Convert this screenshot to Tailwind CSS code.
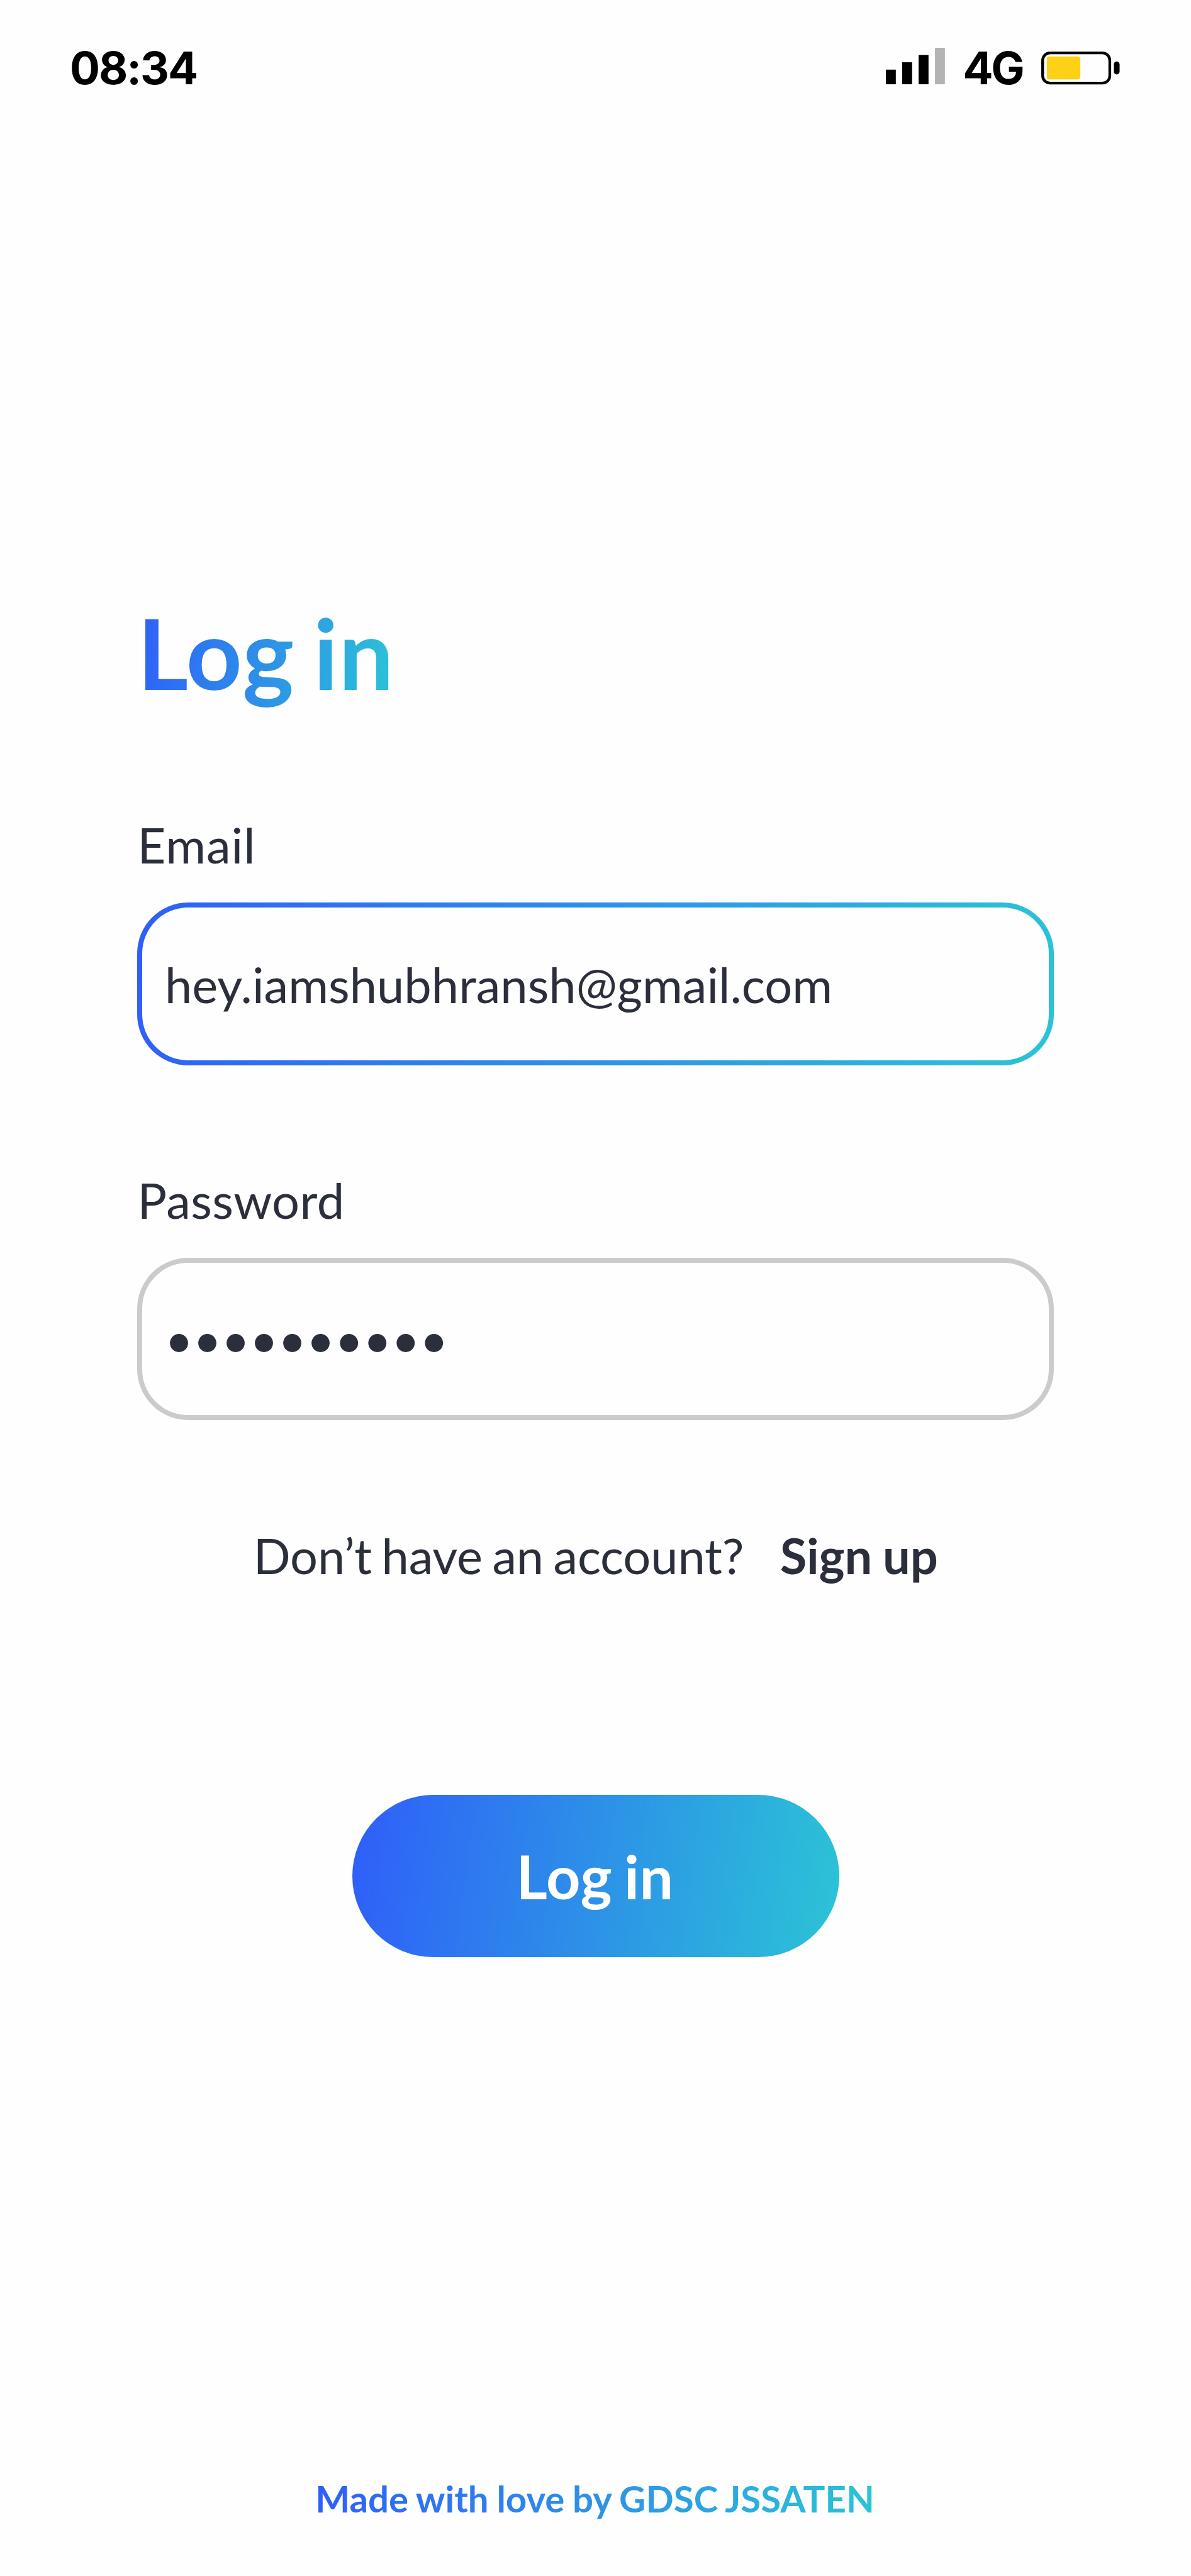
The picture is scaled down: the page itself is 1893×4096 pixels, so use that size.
<!DOCTYPE html>
<html lang="en">
<head>
<meta charset="utf-8">
<title>Log in</title>
<script src="https://cdn.jsdelivr.net/npm/@tailwindcss/browser@4"></script>
</head>
<body class="h-[4096px] w-[1893px] overflow-hidden bg-[#fefefe] font-['Lato',sans-serif] text-[#2b2e3b]">

<!-- Status bar -->
<header class="flex h-[151px] items-end justify-between pr-[113px] pl-[111px] font-['Inter',sans-serif] text-[71.2px] leading-[86px] font-bold text-black">
  <time class="tracking-[-2px]">08:34</time>
  <div class="flex items-end">
    <svg class="mb-[16.7px] h-[58.2px] w-[93.9px]" viewBox="0 0 116 72">
      <rect x="0" y="43" width="19.5" height="29"/>
      <rect x="32" y="28.5" width="19.5" height="43.5"/>
      <rect x="64.3" y="14" width="19.5" height="58"/>
      <rect x="96.5" y="0" width="19.5" height="72" fill="#b3b3b3"/>
    </svg>
    <span class="ml-[29.1px] w-[100px] tracking-[-3.6px]">4G</span>
    <svg class="mb-[16.3px] ml-[24.6px] h-[52.4px] w-[124.8px]" viewBox="0 0 154.3 64.8">
      <rect x="2.7" y="2.7" width="132" height="59.3" rx="14.5" fill="none" stroke="#000" stroke-width="5.4"/>
      <rect x="11" y="9.7" width="65.8" height="45" rx="5" fill="#fcd116"/>
      <rect x="142.7" y="19.6" width="11.3" height="25.4" rx="5.6"/>
    </svg>
  </div>
</header>

<main class="mx-[218.4px] flex flex-col text-[77.66px] leading-[94px]">
  <h1 class="mt-[792.7px] w-fit bg-linear-[98deg,#2f5ef9,#2bc4d6] bg-clip-text text-[155.3px] leading-[186px] font-bold tracking-[0.8px] text-transparent [word-spacing:-8.5px]">Log in</h1>

  <label class="mt-[166.7px] tracking-[1px]">Email</label>
  <div class="mt-[44.5px] h-[258.8px] rounded-[81px] bg-linear-[98deg,#2f5ef9,#2bc4d6] p-[8.1px]">
    <div class="flex h-full items-center rounded-[73px] bg-[#fefefe] pt-[1px] pl-[35.5px]">hey.iamshubhransh@gmail.com</div>
  </div>

  <label class="mt-[167.3px] tracking-[0.4px]">Password</label>
  <div class="mt-[44.6px] flex h-[258.8px] items-center rounded-[81px] border-[8px] border-[#cbcbcb] pt-[1px] pl-[35.5px]">••••••••••</div>

  <p class="mt-[167.2px] flex pl-[184.3px]">
    <span class="w-[837px] tracking-[-0.15px] [word-spacing:-4.3px]">Don’t have an account?</span>
    <a class="font-bold tracking-[-0.15px] [word-spacing:-1.7px]">Sign up</a>
  </p>

  <button class="mt-[334px] flex h-[258.8px] w-[774px] items-center self-center rounded-full bg-linear-[98deg,#2f5ef9,#2bc4d6] pl-[261px] text-[95px] leading-[114px] font-bold tracking-[0.5px] text-white [word-spacing:-4.9px]">Log in</button>
</main>

<footer class="mt-[825.6px] ml-[501.2px] w-fit bg-linear-[98deg,#2f5ef9,#2bc4d6] bg-clip-text text-[58.25px] leading-[70px] font-bold text-transparent [word-spacing:-1.5px]">Made with love by GDSC JSSATEN</footer>

</body>
</html>
